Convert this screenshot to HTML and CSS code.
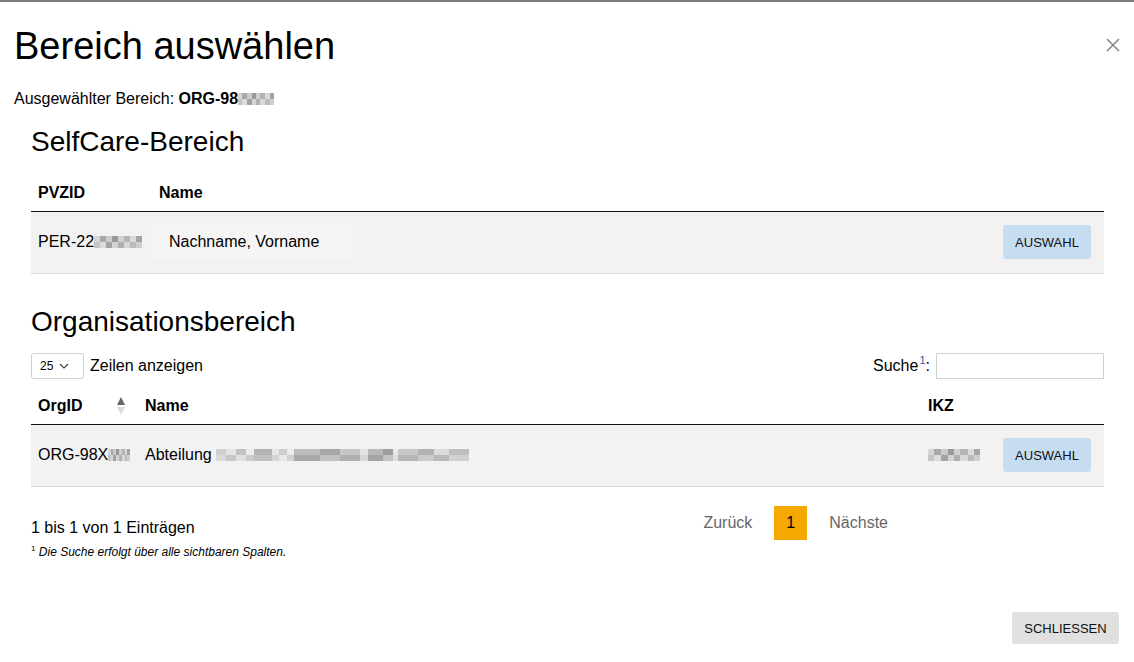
FILE: index.html
```html
<!DOCTYPE html>
<html lang="de">
<head>
  <meta charset="UTF-8" />
  <title>Bereich auswählen</title>
  <link rel="stylesheet" href="styles.css">
</head>
<body>

  <div class="dialog">
    <div class="dialog-head">
      <h1>Bereich auswählen</h1>
      <button class="close-btn" aria-label="Schließen">
        <svg width="14" height="14" viewBox="0 0 14 14">
          <path d="M1 1 L13 13 M13 1 L1 13" stroke="#8a8a8a" stroke-width="1.6" fill="none"/>
        </svg>
      </button>
    </div>

    <p class="selected">Ausgewählter Bereich: <b>ORG-98</b><span class="mask mask-sel"></span></p>

    <div class="section">
      <h2>SelfCare-Bereich</h2>
      <table class="grid grid-self">
        <thead>
          <tr>
            <th class="col-id">PVZID</th>
            <th>Name</th>
            <th class="col-btn"></th>
          </tr>
        </thead>
        <tbody>
          <tr>
            <td class="col-id">PER-22<span class="mask mask-per"></span></td>
            <td class="col-name"><span class="name-box">Nachname, Vorname</span></td>
            <td class="col-btn"><button class="pick-btn">AUSWAHL</button></td>
          </tr>
        </tbody>
      </table>

      <h2 class="org-title">Organisationsbereich</h2>

      <div class="controls">
        <label class="length">
          <span class="select">25
            <svg width="10" height="6" viewBox="0 0 10 6"><path d="M1 1 L5 5 L9 1" stroke="#444" stroke-width="1.2" fill="none"/></svg>
          </span>
          Zeilen anzeigen
        </label>
        <label class="search"><span>Suche<sup>1</sup>:</span> <input type="text"></label>
      </div>

      <table class="grid grid-org">
        <thead>
          <tr>
            <th class="col-org">OrgID
              <span class="sort">
                <svg width="8" height="20" viewBox="0 0 8 20">
                  <path d="M4 1 L8 9 L0 9 Z" fill="#666"/>
                  <path d="M0 11 L8 11 L4 19 Z" fill="#ddd"/>
                </svg>
              </span>
            </th>
            <th>Name</th>
            <th class="col-ikz">IKZ</th>
            <th class="col-btn"></th>
          </tr>
        </thead>
        <tbody>
          <tr>
            <td class="col-org">ORG-98X<span class="mask mask-org"></span></td>
            <td>Abteilung <span class="mask mask-name"></span></td>
            <td class="col-ikz"><span class="mask mask-ikz"></span></td>
            <td class="col-btn"><button class="pick-btn">AUSWAHL</button></td>
          </tr>
        </tbody>
      </table>

      <div class="table-foot">
        <div class="info">
          <p class="count">1 bis 1 von 1 Einträgen</p>
          <p class="note"><sup>1</sup> <em>Die Suche erfolgt über alle sichtbaren Spalten.</em></p>
        </div>
        <div class="pager">
          <span class="pager-link">Zurück</span>
          <span class="pager-current">1</span>
          <span class="pager-link">Nächste</span>
        </div>
      </div>
    </div>

    <div class="dialog-foot">
      <button class="close-text-btn">SCHLIESSEN</button>
    </div>
  </div>

</body>
</html>
```

FILE: styles.css
```css
* {
  margin: 0;
  padding: 0;
  box-sizing: border-box;
}

html, body {
  height: 100%;
  background: white;
  color: black;
  font-family: 'Liberation Sans', Arial, sans-serif;
  font-size: 16px;
}

body {
  border-top: 2px solid #7a7a7a;
  overflow: hidden;
}

.dialog {
  padding: 0 14px 0 14px;
}

.dialog-head {
  display: flex;
  justify-content: space-between;
  align-items: center;
  padding-top: 22px;
}

h1 {
  font-size: 38px;
  font-weight: normal;
  line-height: 44px;
}

.close-btn {
  background: none;
  border: none;
  width: 14px;
  height: 14px;
  margin-top: -2px;
  display: flex;
}

.selected {
  margin-top: 22px;
  line-height: 18px;
}

/* pixelated redactions */
.mask {
  display: inline-block;
  height: 12px;
  vertical-align: -1px;
  background:
    linear-gradient(90deg, #d6d6d6 0 12%, #a8a8a8 12% 25%, #cbcbcb 25% 38%, #9a9a9a 38% 50%, #d0d0d0 50% 62%, #b4b4b4 62% 76%, #dadada 76% 88%, #a4a4a4 88% 100%) top / 100% 50% no-repeat,
    linear-gradient(90deg, #c4c4c4 0 12%, #dcdcdc 12% 25%, #a2a2a2 25% 38%, #d4d4d4 38% 50%, #b0b0b0 50% 62%, #d8d8d8 62% 76%, #bcbcbc 76% 88%, #cfcfcf 88% 100%) bottom / 100% 50% no-repeat;
}

.mask-sel { width: 36px; }
.mask-per { width: 48px; }
.mask-org { width: 22px; }
.mask-ikz { width: 52px; }

.mask-name {
  width: 253px;
  background:
    linear-gradient(90deg, #cfcfcf 0 4%, #e4e4e4 4% 8%, #c2c2c2 8% 12%, #ebebeb 12% 15%, #b4b4b4 15% 22%, #e6e6e6 22% 25%, #cdcdcd 25% 28%, #ececec 28% 31%, #bdbdbd 31% 41%, #a6a6a6 41% 49%, #c6c6c6 49% 57%, #e2e2e2 57% 60%, #b8b8b8 60% 66%, #9e9e9e 66% 70%, #e9e9e9 70% 72%, #c8c8c8 72% 80%, #b2b2b2 80% 86%, #dcdcdc 86% 92%, #bebebe 92% 100%) top / 100% 50% no-repeat,
    linear-gradient(90deg, #dadada 0 4%, #c8c8c8 4% 8%, #e0e0e0 8% 12%, #cccccc 12% 15%, #c0c0c0 15% 22%, #d4d4d4 22% 25%, #e8e8e8 25% 28%, #d2d2d2 28% 31%, #a8a8a8 31% 41%, #c2c2c2 41% 49%, #b0b0b0 49% 57%, #d6d6d6 57% 60%, #a4a4a4 60% 66%, #c4c4c4 66% 70%, #dedede 70% 72%, #b6b6b6 72% 80%, #cacaca 80% 86%, #bababa 86% 92%, #d0d0d0 92% 100%) bottom / 100% 50% no-repeat;
}

.section {
  padding: 0 16px 0 17px;
}

h2 {
  font-size: 28px;
  font-weight: normal;
  line-height: 32px;
  margin-top: 18px;
}

.grid {
  width: 100%;
  border-collapse: collapse;
}

.grid th {
  text-align: left;
  font-weight: bold;
  line-height: 18px;
  padding: 10px 7px 9px;
  border-bottom: 1px solid #111;
  white-space: nowrap;
}

.grid td {
  background: #f2f2f2;
  line-height: 18px;
  padding: 13px 7px 14px;
  border-bottom: 1px solid #dcdcdc;
  white-space: nowrap;
}

.grid-self {
  margin-top: 16px;
}

.grid-self .col-id {
  width: 121px;
}

.grid-self .col-name {
  padding-left: 0;
}

.name-box {
  display: inline-block;
  width: 200px;
  padding: 8px 17px;
  background: #f5f5f5;
}

.col-btn {
  width: 110px;
  text-align: right;
}

.grid td.col-btn {
  padding-right: 13px;
}

.pick-btn {
  background: #c5dcf1;
  border: none;
  border-radius: 3px;
  font-family: inherit;
  font-size: 13px;
  color: #111;
  width: 88px;
  height: 34px;
  vertical-align: middle;
}

.org-title {
  margin-top: 32px;
}

.controls {
  display: flex;
  justify-content: space-between;
  align-items: center;
  margin-top: 15px;
}

.length {
  display: flex;
  align-items: center;
  gap: 6px;
}

.select {
  display: inline-flex;
  align-items: center;
  gap: 6px;
  height: 26px;
  width: 53px;
  padding-left: 8px;
  border: 1px solid #cfcfcf;
  border-radius: 3px;
  font-size: 12px;
}

.search {
  display: flex;
  align-items: center;
}

.search sup {
  color: #1a5ea8;
  font-size: 11px;
  line-height: 0;
  position: relative;
  top: -1px;
  margin-left: 1px;
}

.search input {
  width: 168px;
  height: 26px;
  margin-left: 6px;
  border: 1px solid #cfcfcf;
}

.grid-org {
  margin-top: 8px;
}

.grid-org .col-org {
  width: 107px;
  position: relative;
}

.sort {
  position: absolute;
  right: 13px;
  top: 9px;
}

.grid-org .col-ikz {
  width: 73px;
}

.table-foot {
  display: flex;
  justify-content: space-between;
  align-items: flex-start;
}

.count {
  margin-top: 32px;
  line-height: 18px;
}

.note {
  margin-top: 8px;
  font-size: 12px;
  line-height: 14px;
}

.note sup {
  font-size: 8px;
  vertical-align: 5px;
  line-height: 0;
}

.pager {
  display: flex;
  align-items: center;
  margin-top: 19px;
  margin-right: 196px;
}

.pager-link {
  color: #666;
  padding: 8px 20px;
  line-height: 18px;
}

.pager-current {
  background: #f5a800;
  width: 33px;
  height: 34px;
  line-height: 34px;
  text-align: center;
  margin: 0 2px;
}

.dialog-foot {
  display: flex;
  justify-content: flex-end;
  margin-top: 53px;
}

.close-text-btn {
  background: #e0e0e0;
  border: none;
  border-radius: 3px;
  font-family: inherit;
  font-size: 13px;
  color: #111;
  width: 107px;
  height: 32px;
  margin-right: 1px;
}
```
